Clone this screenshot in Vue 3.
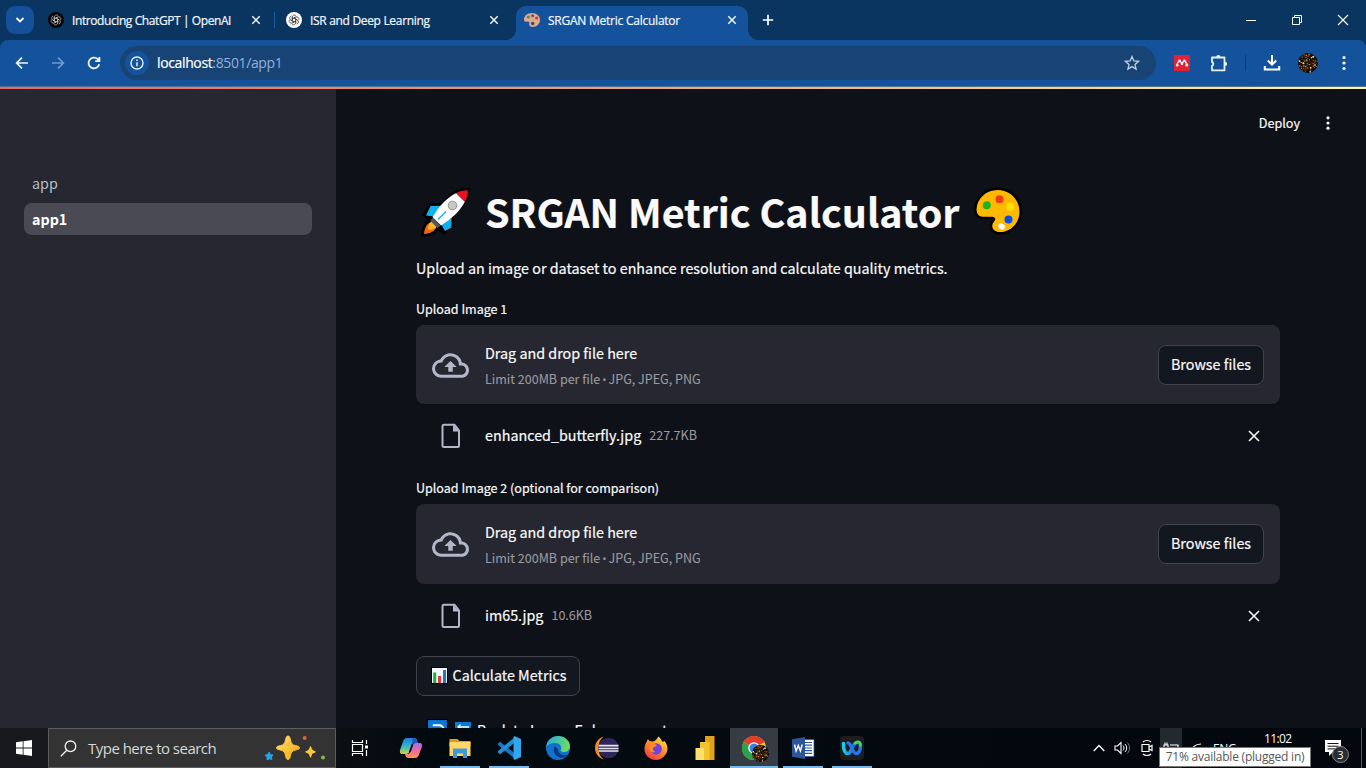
<script setup>
const tabs = [
  { title: 'Introducing ChatGPT | OpenAI', icon: 'gpt-dark', cls: 'tab-first' },
  { title: 'ISR and Deep Learning', icon: 'gpt-light', cls: 'tab-second' },
  { title: 'SRGAN Metric Calculator', icon: 'palette', cls: 'tab-active' },
]
const uploads = [
  { label: 'Upload Image 1', file: 'enhanced_butterfly.jpg', size: '227.7KB', cls: 'up-one' },
  { label: 'Upload Image 2 (optional for comparison)', file: 'im65.jpg', size: '10.6KB', cls: 'up-two' },
]
const petals = [0, 60, 120, 180, 240, 300]
const sparks = Array.from({ length: 70 }, (_, i) => {
  const a = i * 2.39996
  const r = Math.sqrt(i / 70) * 9.4
  return {
    x: 10 + r * Math.cos(a),
    y: 10 + r * Math.sin(a),
    c: ['#c9762b', '#f0d9a0', '#7a3412', '#2b1508', '#4b5a3c', '#b0502a', '#2b1508'][(i * 5) % 7],
    s: 0.5 + ((i * 7) % 5) * 0.14,
  }
})
</script>

<template>
  <div class="screen">
    <header class="tabstrip">
      <div class="tab-search">
        <svg width="10" height="8" viewBox="0 0 10 8"><path d="M1.500 2l3.500 3.500L8.500 2" fill="none" stroke="#fff" stroke-width="1.800" /></svg>
      </div>
      <div v-for="t in tabs" :key="t.title" class="tab" :class="t.cls">
        <svg v-if="t.icon !== 'palette'" class="fav" viewBox="0 0 16 16">
          <circle cx="8" cy="8" r="8" :fill="t.icon === 'gpt-dark' ? '#050505' : '#fff'" />
          <g fill="none" :stroke="t.icon === 'gpt-dark' ? '#c8c8c8' : '#333'" stroke-width=".7">
            <path v-for="p in petals" :key="p" :transform="`rotate(${p} 8 8)`" d="M6.300 9V5.200a2.200 2.200 0 0 1 3.900-1.400M6.300 6.900L9.700 5" />
          </g>
        </svg>
        <svg v-else class="fav" viewBox="0 0 16 16">
          <path d="M8 1C3.500 1 0 3.800 0 7.500c0 2 1.500 2.500 3 2.200 1.800-.4 2.600.6 2.200 2C4.800 13.500 6.200 15 8.500 15 13 15 16 11.800 16 7.800 16 4 12.700 1 8 1z" fill="#dfa78e" />
          <circle cx="4.300" cy="5" r="1.500" fill="#5c8a3a" /><circle cx="8.600" cy="3.700" r="1.500" fill="#3b5f8f" />
          <circle cx="12.600" cy="6" r="1.500" fill="#d8332e" /><circle cx="12.500" cy="10" r="1.500" fill="#efb73a" />
          <circle cx="8.700" cy="11.500" r="1.800" fill="#36507c" />
        </svg>
        <span class="tab-title">{{ t.title }}</span>
        <svg class="tab-x" viewBox="0 0 10 10"><path d="M1.300 1.300l7.400 7.400M8.700 1.300L1.300 8.700" stroke="#f2f7ff" stroke-width="1.500" /></svg>
      </div>
      <svg class="plus" viewBox="0 0 12 12"><path d="M6 .8v10.400M.8 6h10.400" stroke="#fff" stroke-width="1.700" /></svg>
      <div class="winctl">
        <svg viewBox="0 0 12 12"><path d="M1 6.500h10" stroke="#fff" /></svg>
        <svg viewBox="0 0 12 12"><path d="M1.500 3.500h7v7h-7zM3.500 3.500v-2h7v7h-2" fill="none" stroke="#fff" /></svg>
        <svg viewBox="0 0 12 12"><path d="M1 1l10 10M11 1L1 11" stroke="#fff" stroke-width="1.100" /></svg>
      </div>
    </header>

    <div class="toolbar">
      <div class="nav">
        <svg viewBox="0 0 16 16"><path d="M14 8H3M8 2.600L2.600 8 8 13.400" fill="none" stroke="#eef5ff" stroke-width="1.700" /></svg>
        <svg viewBox="0 0 16 16"><path d="M2 8h11M8 2.600L13.400 8 8 13.400" fill="none" stroke="#6f9bd0" stroke-width="1.700" /></svg>
        <svg viewBox="0 0 16 16"><path d="M13.200 9.200A5.400 5.400 0 1 1 11.800 4.200L13.200 5.700M13.400 2v4.200H9.200" fill="none" stroke="#eef5ff" stroke-width="1.800" /></svg>
      </div>
      <div class="omnibox">
        <div class="info">
          <svg viewBox="0 0 14 14"><circle cx="7" cy="7" r="6" fill="none" stroke="#e6f0ff" stroke-width="1.400" /><path d="M7 6.300v4M7 3.500v1.500" stroke="#e6f0ff" stroke-width="1.500" /></svg>
        </div>
        <span class="url"><b>localhost</b>:8501/app1</span>
        <svg class="star" viewBox="0 0 16 16"><path d="M8 1.500l1.900 4.400 4.700.4L11 9.400l1.100 4.700L8 11.600l-4.100 2.500L5 9.400 1.400 6.300l4.700-.4z" fill="none" stroke="#c3cfdf" stroke-width="1.300" /></svg>
      </div>
      <div class="ext">
        <svg class="mendeley" viewBox="0 0 16 16"><path d="M0 0h16v16H0z" fill="#e02338" /><path d="M3.200 10.400C3.200 8.300 4 7 5.500 5.800 6.500 6.300 7 7.500 8 8.400 9 7.500 9.500 6.300 10.500 5.800 12 7 12.800 8.300 12.800 10.400" fill="none" stroke="#fff" stroke-width="1.300" /><circle cx="5.600" cy="5.700" r="1.300" fill="#fff" /><circle cx="10.400" cy="5.700" r="1.300" fill="#fff" /><circle cx="8" cy="8.700" r="1.200" fill="#fff" /><circle cx="3.200" cy="10.300" r="1.300" fill="#fff" /><circle cx="12.800" cy="10.300" r="1.300" fill="#fff" /></svg>
        <svg class="puzzle" viewBox="0 0 18 18"><path d="M2 3.500H14.500V16.300H2v-4.400a2.200 2.200 0 0 0 0-4z" fill="none" stroke="#eaf2ff" stroke-width="1.800" stroke-linejoin="round" /><path d="M6.300 3a2.100 2.100 0 0 1 4.200 0zM15 7.800a2.100 2.100 0 0 1 0 4.200z" fill="#eaf2ff" /></svg>
        <i class="bar"></i>
        <svg class="dl" viewBox="0 0 18 18"><path d="M9 1v9.500M4.800 6.500L9 10.700l4.200-4.200M1.800 12v3.600h14.400V12" fill="none" stroke="#fff" stroke-width="2" /></svg>
        <svg class="avatar" viewBox="0 0 20 20"><circle cx="10" cy="10" r="10" fill="#120b06" /><circle v-for="(s, i) in sparks" :key="i" :cx="s.x" :cy="s.y" :r="s.s" :fill="s.c" /></svg>
        <svg class="kebab" viewBox="0 0 4 16"><circle cx="2" cy="2.500" r="1.600" fill="#fff" /><circle cx="2" cy="8" r="1.600" fill="#fff" /><circle cx="2" cy="13.500" r="1.600" fill="#fff" /></svg>
      </div>
    </div>
    <div class="rainbow"></div>

    <div class="page">
      <aside>
        <a>app</a>
        <a class="on">app1</a>
      </aside>
      <main>
        <div class="apphead">
          <span>Deploy</span>
          <svg viewBox="0 0 4 16"><circle cx="2" cy="2.800" r="1.600" fill="#fafafa" /><circle cx="2" cy="8" r="1.600" fill="#fafafa" /><circle cx="2" cy="13.200" r="1.600" fill="#fafafa" /></svg>
        </div>
        <div class="col">
          <h1>
            <svg class="rocket" viewBox="0 0 50 50">
              <path d="M48.500 1.500C38 1 31 5 23.500 14.500L22 17l-13-.5L2 28l5.500 5.500C3 36.500 1 41 .8 49c8-.2 12.700-2.200 15.700-6.700L23 47l9-7.500V27C43 19 49 12 48.500 1.500z" fill="#000" stroke="#000" stroke-width="1.500" />
              <path d="M9.500 19h11l-8 10.500L5 28.500zM30.500 31v9.500L24 44l-4-7z" fill="#0fb0ee" />
              <path d="M9.500 35.500c-4 1.500-6 5-6.500 11.500 6.500-.5 10.500-2.500 12-6.500z" fill="#f7630c" /><path d="M10.500 34.500c-3 2-3.500 4.500-3.500 8 4.500.5 7.500-.5 9-3.500z" fill="#ffb52e" />
              <path d="M12 30.500l7.500 8.500-3.200 2-7-7.200z" fill="#555" />
              <path d="M11.500 30C19 18 26 10.500 35.500 6l8.500 8.500C39 24 31 31.500 20 38.500z" fill="#fff" />
              <path d="M35 6.200C39 4 42.500 3.200 46.800 3.200c0 4.300-.8 7.800-3 11.800z" fill="#e81224" />
              <circle cx="31.500" cy="18.500" r="4.800" fill="#9c9c9c" /><circle cx="31.500" cy="18.500" r="3.700" fill="#c7c7c7" />
              <path d="M17 32.500l8-8" stroke="#0fb0ee" stroke-width="1.500" />
            </svg>
            <span>SRGAN Metric Calculator</span>
            <svg class="palette" viewBox="0 0 50 50">
              <path d="M24.500 3C13 3 4 11.500 3.500 22.500 3.500 28 7 30 12 29.800h7c3.500.2 4.200 2.500 2 4.700-3.500 4.500-1.500 9.500 4 10.500C37 46 46.500 36.500 46.500 25 46.500 12.500 37 3 24.500 3z" fill="#ffb900" stroke="#000" stroke-width="5" paint-order="stroke" stroke-linejoin="round" />
              <circle cx="13.800" cy="18.300" r="4" fill="#1cb522" /><circle cx="26.500" cy="12.200" r="4" fill="#f03a17" /><circle cx="37.300" cy="19.800" r="4" fill="#ffe000" /><circle cx="35.500" cy="32.500" r="4" fill="#0a4fe0" />
              <ellipse cx="28.600" cy="39.500" rx="3.500" ry="2.800" transform="rotate(35 28.600 39.500)" fill="#fff" />
            </svg>
          </h1>
          <p class="lead">Upload an image or dataset to enhance resolution and calculate quality metrics.</p>
          <section v-for="u in uploads" :key="u.label" :class="u.cls">
            <label>{{ u.label }}</label>
            <div class="drop">
              <svg class="cloud" viewBox="0 0 24 24"><path d="M19.350 10.040A7.490 7.490 0 0 0 12 4C9.110 4 6.600 5.640 5.350 8.040A5.994 5.994 0 0 0 0 14c0 3.310 2.690 6 6 6h13c2.760 0 5-2.240 5-5 0-2.640-2.050-4.780-4.650-4.960zM19 18H6c-2.210 0-4-1.790-4-4s1.790-4 4-4h.71C7.370 7.690 9.480 6 12 6c3.040 0 5.500 2.460 5.500 5.500v.5H19c1.660 0 3 1.340 3 3s-1.340 3-3 3zM8 13h2.550v3h2.900v-3H16l-4-4z" fill="#b4b7ca" /></svg>
              <div class="dtext">
                <span class="d1">Drag and drop file here</span>
                <span class="d2">Limit 200MB per file <i>•</i> JPG, JPEG, PNG</span>
              </div>
              <div class="btn browse">Browse files</div>
            </div>
            <div class="file">
              <svg class="doc" viewBox="0 0 20 26"><path d="M13.500 1.700H3A1.500 1.500 0 0 0 1.500 3.200v19.300A1.500 1.500 0 0 0 3 24h13.500a1.500 1.500 0 0 0 1.500-1.500V7.500z" fill="none" stroke="#b4b7ca" stroke-width="2" /><path d="M12 1.500v7h6.500z" fill="#b4b7ca" /></svg>
              <span class="fname">{{ u.file }}</span>
              <span class="fsize">{{ u.size }}</span>
              <svg class="fx" viewBox="0 0 12 12"><path d="M1 1l10 10M11 1L1 11" stroke="#fafafa" stroke-width="1.600" /></svg>
            </div>
          </section>
          <div class="btn calc">
            <svg viewBox="0 0 17 17"><path d="M0 0h17v17H0z" fill="#000" /><path d="M1 1h15v15H1z" fill="#f4f6fa" /><path d="M2.200 5.500h3V16h-3z" fill="#16b335" /><path d="M7 9h3v7H7z" fill="#e8323c" /><path d="M12 3h3v13h-3z" fill="#1579cf" /></svg>
            <span>Calculate Metrics</span>
          </div>
          <div class="back">
            <svg class="b1" viewBox="0 0 20 20"><path d="M0 0h20v20H0z" fill="#000" /><path d="M1 1h18v18H1z" fill="#0a78d6" /><path d="M5.500 6h6.500a3.500 3.500 0 0 1 0 7H6" fill="none" stroke="#fff" stroke-width="1.800" /></svg>
            <svg class="b2" viewBox="0 0 16 16"><path d="M0 0h16v16H0z" fill="#0a78d6" /><path d="M3 5h11M5.500 2.500L3 5l3 3" fill="none" stroke="#fff" stroke-width="1.300" /></svg>
            <span>Back to Image Enhancement</span>
          </div>
        </div>
      </main>
    </div>

    <footer>
      <div class="start">
        <svg viewBox="0 0 16 16"><path d="M0 2.300l6.700-1v6.300H0zM7.500 1.200L16 0v7.600H7.500zM0 8.400h6.700v6.300L0 13.700zM7.500 8.400H16V16l-8.500-1.200z" fill="#fff" /></svg>
      </div>
      <div class="search">
        <svg class="mag" viewBox="0 0 17 17"><circle cx="10.500" cy="6.300" r="5.300" fill="none" stroke="#f3f3f3" stroke-width="1.300" /><path d="M6.800 10.200L.8 16.200" stroke="#f3f3f3" stroke-width="1.300" /></svg>
        <span>Type here to search</span>
        <svg class="stars" viewBox="0 0 62 26">
          <defs><linearGradient id="gold" x1="0" y1="0" x2="1" y2="1"><stop offset="0" stop-color="#ffe168" /><stop offset="1" stop-color="#f5a50c" /></linearGradient></defs>
          <path d="M24 1c1.500 0 2 1.500 2.500 4 .8 3.500 1.500 4.800 5 5.600 3 .6 4 1 4 2.200s-1 1.600-4 2.300c-3.500.8-4.200 2-5 5.500-.5 2.500-1 4-2.500 4s-2-1.500-2.500-4c-.8-3.500-1.500-4.700-5-5.500-3-.7-4-1.100-4-2.300s1-1.600 4-2.200c3.500-.8 4.200-2.100 5-5.600.5-2.500 1-4 2.500-4z" fill="url(#gold)" stroke="url(#gold)" />
          <path d="M46.500 12c.9 3.200 1.500 3.800 4.500 4.800-3 1-3.600 1.700-4.500 5-.9-3.300-1.500-4-4.500-5 3-1 3.600-1.600 4.500-4.800z" fill="#ffc936" stroke="#ffc936" stroke-width="1.300" stroke-linejoin="round" />
          <path d="M5 17l1.500 2.800 2.500.2-1.700 2.200.7 2.300-2.600-.8-2.400 1.300v-2.700L1.200 20l2.600-.3z" fill="#25a5e5" stroke="#25a5e5" stroke-linejoin="round" />
          <circle cx="40.700" cy="3" r="2" fill="#df613c" /><circle cx="59" cy="22.500" r="2" fill="#87bd43" />
        </svg>
      </div>
      <div class="apps">
        <div class="app tv"><svg viewBox="0 0 18 18"><path d="M1.500 1v2.500h10V1M1.500 17v-2.500h10V17M1.500 5.500h10v7h-10zM15.500 1v4M15.500 11v6" fill="none" stroke="#fff" stroke-width="1.200" /><path d="M14 6.500h3v3h-3z" fill="#fff" /></svg></div>
        <div class="app"><svg viewBox="0 0 24 24">
          <defs><linearGradient id="cpA" x1="0" y1="0" x2="0" y2="1"><stop offset="0" stop-color="#1c7fe8" /><stop offset=".55" stop-color="#35b9c4" /><stop offset="1" stop-color="#d9d637" /></linearGradient><linearGradient id="cpB" x1="0" y1="0" x2="0" y2="1"><stop offset="0" stop-color="#a66cf0" /><stop offset=".5" stop-color="#ef6aa0" /><stop offset="1" stop-color="#ff9552" /></linearGradient></defs>
          <path d="M8 2h7c2 0 2.700 1 3.200 3l.6 2h-3c-2 0-3 1-3.600 3l-1.600 5c-.7 2-1.600 3-3.600 3H3.500C1 18 .5 16 1.200 13.500l3-8.500C5 3 6 2 8 2z" fill="url(#cpA)" /><path d="M14 2c2.300 0 3.200 1 3.700 3l.5 2h-2.700c-2 0-3 1-3.500 3z" fill="#2357c7" />
          <path d="M16 22H9.500c-2 0-2.700-1-3.200-3L6 18h2c2 0 3-1 3.600-3l1.700-5c.7-2 1.700-3 3.700-3h3.500C23 7 23.500 9 22.800 11l-2.900 8c-.9 2-1.900 3-3.900 3z" fill="url(#cpB)" /><path d="M13.500 8.500L10.800 16" stroke="#071018" stroke-width="1.800" />
        </svg></div>
        <div class="app run"><svg viewBox="0 0 24 24"><path d="M1.500 3h8l2 2H22.500v5h-21z" fill="#d99b22" /><path d="M1.500 6h21v14h-21z" fill="#ffd667" /><path d="M5 22v-9.500h14V22h-4v-4.500H9V22z" fill="#3f9bd8" /></svg></div>
        <div class="app run"><svg viewBox="0 0 24 24"><path d="M1 7.500l2-1.700L18 17.500V23L1 9z" fill="#1677bd" /><path d="M1 16.500l2 1.700L18 6.500V1L1 15z" fill="#1f8fda" /><path d="M17.500 0L24 3v18l-6.500 3-1-1V1z" fill="#2fa8ef" /></svg></div>
        <div class="app"><svg viewBox="0 0 24 24">
          <defs><linearGradient id="edA" x1="0" y1="0" x2="1" y2=".3"><stop offset="0" stop-color="#24a8e8" /><stop offset="1" stop-color="#68dc64" /></linearGradient></defs>
          <circle cx="12" cy="12" r="12" fill="#1272ca" /><path d="M.2 11C1 4 6 0 12 0c7 0 12 5 12 10 0 4-3 6-6 6-2.500 0-4-1-3.200-2.500C16.500 10 13 7 9.500 7 5 7 1.500 8.500.2 11z" fill="url(#edA)" /><path d="M9 10c-3 4-.5 10 5 11.500 3.500.7 6.500-.5 8.300-3-4.300 1.500-10 .5-10.300-5z" fill="#0b3a80" />
        </svg></div>
        <div class="app"><svg viewBox="0 0 24 24"><path d="M9 .5C3 2 0 7 0 12s3 10 9 11.500C4.500 20 3.500 16 3.500 12S4.500 4 9 .5z" fill="#f28c24" /><circle cx="13.500" cy="12" r="10.300" fill="#2f2558" /><path d="M3.500 8.700h20v1.800h-20zM3.500 11.700h20v1.500h-20zM3.500 14.300h20v1.500h-20z" fill="#e9e6f2" /></svg></div>
        <div class="app"><svg viewBox="0 0 24 24">
          <defs><linearGradient id="ffA" x1=".8" y1="0" x2=".2" y2="1"><stop offset="0" stop-color="#ffe24a" /><stop offset=".5" stop-color="#ff8a25" /><stop offset="1" stop-color="#f0304c" /></linearGradient></defs>
          <path d="M14.500.5c2 2 3 3 3.500 5 1 .3 1.500.2 2.500-.5 2.500 3 3 5.500 3 8C23 19 18 24 12 24S.5 19.500.5 13c0-3 1-5.500 2.500-8 .3-1 .8-1.700 1-2 1 2 2 2.500 4 2.500 2.500 0 4-1 6.500-5z" fill="url(#ffA)" /><circle cx="12.200" cy="13" r="5.700" fill="#7143dc" /><path d="M4 6c3-1 6 0 7 2l2 1c-1 2-3 1.500-4 3-.5 2 .5 3 2.500 4C7 18 4 13 4 6z" fill="#ff8a2a" />
        </svg></div>
        <div class="app"><svg viewBox="0 0 24 24"><path d="M12 0h9.500v24H12z" fill="#e0a31b" /><path d="M7 6h9.500v18H7z" fill="#f2c52e" /><path d="M2.500 12H11v12H2.500z" fill="#ffe06c" /></svg></div>
        <div class="app run cur">
          <svg viewBox="0 0 24 24"><circle cx="12" cy="12" r="12" fill="#f7c62f" /><path d="M12 12L1.600 6A12 12 0 0 1 22.400 6z" fill="#e33b2e" /><path d="M12 12L1.600 6A12 12 0 0 0 12 24l5-9z" fill="#2aa14a" /><circle cx="12" cy="12" r="5.800" fill="#fff" /><circle cx="12" cy="12" r="4.500" fill="#347ee8" /></svg>
          <svg class="mini" viewBox="0 0 20 20"><circle cx="10" cy="10" r="10" fill="#120b06" /><circle v-for="(s, i) in sparks" :key="i" :cx="s.x" :cy="s.y" :r="s.s" :fill="s.c" /></svg>
        </div>
        <div class="app run"><svg viewBox="0 0 24 24"><path d="M12 3.500h11v17H12z" fill="#fff" stroke="#2b579a" stroke-width=".8" /><path d="M14 6.500h7M14 9.200h7M14 12h7M14 14.700h7M14 17.400h7" stroke="#2b579a" stroke-width="1.200" /><path d="M1 3.200L14 1v22L1 20.800z" fill="#2b579a" /><path d="M3.500 8.500l1.600 6.500L7.300 9.500l2.100 5.500L11.200 8.500" fill="none" stroke="#fff" stroke-width="1.400" /></svg></div>
        <div class="app run"><svg viewBox="0 0 24 24"><defs><linearGradient id="wbA"><stop offset="0" stop-color="#1ccbe8" /><stop offset="1" stop-color="#1d54e8" /></linearGradient></defs><rect width="24" height="24" rx="4" fill="#1d1d1f" /><path d="M3.500 7.500c0 6 1.500 10 4.500 10 4 0 4-10.500 8.500-10.500" fill="none" stroke="url(#wbA)" stroke-width="3.600" stroke-linecap="round" /><path d="M8 7c3.500 0 4 10.500 8 10.500 3 0 4.500-4 4.500-9" fill="none" stroke="#2574f0" stroke-width="3.400" stroke-linecap="round" /><path d="M15 7.200c3-2 5.300-1.500 5.300 2" fill="none" stroke="#43d468" stroke-width="3" stroke-linecap="round" /></svg></div>
      </div>
      <div class="tray">
        <svg class="chev" viewBox="0 0 12 12"><path d="M.7 9L6 3.500 11.300 9" fill="none" stroke="#fff" stroke-width="1.300" /></svg>
        <svg class="spk" viewBox="0 0 17 14"><path d="M1 5h2.500L7 1.500v11L3.500 9H1z" fill="none" stroke="#fff" stroke-width="1.100" /><path d="M9 4.500c1.300 1.500 1.300 3.500 0 5M11 3c2.200 2.500 2.200 5.500 0 8" fill="none" stroke="#fff" /><path d="M13.300 1.500c3 3.500 3 7.500 0 11" fill="none" stroke="#777" /></svg>
        <svg class="cam" viewBox="0 0 12 18"><path d="M1 5.500h7v7H1zM8 8l3-1.500v5L8 10M2 3c2-2 6-2 8 0M2 15c2 2 6 2 8 0" fill="none" stroke="#fff" stroke-width="1.200" /></svg>
        <div class="bat"><svg viewBox="0 0 16 14"><path d="M1 4h4v3a2 2 0 0 1-4 0zM2 1.500V4M4 1.500V4M7 4h8v7H3V9" fill="none" stroke="#fff" stroke-width="1.100" /></svg></div>
        <svg class="wifi" viewBox="0 0 14 14"><path d="M2 12C2 7 6 3 12 3M5.500 12c0-3 2.500-5.500 6.500-5.500" fill="none" stroke="#fff" stroke-width="1.100" /></svg>
        <span class="eng">ENG</span>
        <span class="clock">11:02</span>
        <div class="note">
          <svg viewBox="0 0 16 16"><path d="M0 0h16v12H8l-4 4v-4H0z" fill="#fff" /><path d="M2.500 3.500h11M2.500 6.200h11M2.500 8.900h8" stroke="#111" /></svg>
          <span class="badge">3</span>
        </div>
        <i class="edge"></i>
        <div class="tip">71% available (plugged in)</div>
      </div>
    </footer>
  </div>
</template>

<style>
html, body { margin: 0; background: #0e1117; overflow: hidden; }
</style>
<style scoped>
* { box-sizing: border-box; }
svg { display: block; flex: none; }
.screen { width: 1366px; height: 768px; display: flex; flex-direction: column; overflow: hidden; background: #0b3460; font-family: "Open Sans", "Noto Sans", sans-serif; }
.tabstrip { height: 40px; flex: none; display: flex; align-items: center; background: #0b3561; }
.tab-search { width: 28px; height: 28px; margin-left: 6px; border-radius: 9px; background: #14519a; display: flex; align-items: center; justify-content: center; }
.tab { display: flex; align-items: center; height: 34px; margin-top: 6px; padding-left: 8px; position: relative; color: #f2f7ff; }
.tab-first, .tab-second { padding-bottom: 6px; }
.tab-first { width: 235px; margin-left: 6px; }
.tab-first::after { content: ""; position: absolute; right: 0; top: 6px; width: 1px; height: 16px; background: #1a5aa4; }
.tab-second { width: 238px; margin-left: 3px; }
.tab-active { width: 232px; background: #14539c; border-radius: 10px 10px 0 0; padding-bottom: 6px; }
.tab-active::before, .tab-active::after { content: ""; position: absolute; bottom: 0; width: 10px; height: 10px; }
.tab-active::before { left: -10px; background: radial-gradient(circle at 0 0, transparent 9.5px, #14539c 10px); }
.tab-active::after { right: -10px; background: radial-gradient(circle at 100% 0, transparent 9.5px, #14539c 10px); }
.fav { width: 16px; height: 16px; }
.tab-title { margin-left: 8px; padding-top: 1px; font-size: 12px; line-height: 16px; white-space: nowrap; letter-spacing: -.24px; -webkit-text-stroke: .2px; }
.tab-first .tab-title { letter-spacing: -.41px; }
.tab-second .tab-title { letter-spacing: -.32px; }
.tab-x { width: 10px; height: 10px; margin-left: auto; margin-right: 11px; }
.tab-first .tab-x { margin-right: 14px; }
.tab-second .tab-x { margin-right: 17px; }
.plus { width: 12px; height: 12px; margin-left: 14px; }
.winctl { margin-left: auto; display: flex; gap: 34px; padding-right: 17px; }
.winctl svg { width: 12px; height: 12px; }
.toolbar { height: 46px; flex: none; display: flex; align-items: center; background: #14539c; border-radius: 8px 8px 0 0; }
.nav { display: flex; gap: 20px; margin-left: 14px; }
.nav svg { width: 16px; height: 16px; }
.omnibox { width: 1036px; height: 34px; margin-left: 18px; border-radius: 17px; background: #174475; display: flex; align-items: center; padding-left: 5px; }
.info { width: 24px; height: 24px; border-radius: 50%; background: #14539c; display: flex; align-items: center; justify-content: center; }
.info svg { width: 14px; height: 14px; }
.url { margin-left: 8px; font-size: 14px; line-height: 20px; color: #92b1db; letter-spacing: -.37px; }
.url b { font-weight: 400; color: #fff; -webkit-text-stroke: .2px; }
.star { width: 16px; height: 16px; margin-left: auto; margin-right: 16px; }
.ext { display: flex; align-items: center; }
.mendeley { width: 16px; height: 16px; margin-left: 18px; }
.puzzle { width: 18px; height: 18px; margin-left: 20px; }
.bar { width: 1px; height: 16px; background: #0d3d75; margin-left: 17px; }
.dl { width: 18px; height: 18px; margin-left: 17px; }
.avatar { width: 20px; height: 20px; margin-left: 17px; }
.kebab { width: 4px; height: 16px; margin-left: 24px; }
.rainbow { height: 3px; flex: none; background: linear-gradient(90deg, #e8666a, #e6a887 50%, #fdf7a2); border-top: 1px solid #55718a; }
.page { height: 639px; flex: none; display: flex; overflow: hidden; font-family: "Noto Sans CJK SC", "Noto Sans", sans-serif; color: #fafafa; -webkit-text-stroke: .2px; }
aside { width: 336px; flex: none; background: #262730; padding: 78px 24px 0; display: flex; flex-direction: column; gap: 4px; }
aside a { height: 32px; line-height: 32px; padding-left: 8px; border-radius: 8px; font-size: 14.300px; color: #b6bfc8; -webkit-text-stroke: 0; }
aside a.on { background: #494a54; color: #fff; font-weight: 700; }
main { flex: 1; background: #0e1117; }
.apphead { height: 68px; display: flex; align-items: center; justify-content: flex-end; font-size: 12.600px; }
.apphead span { padding-bottom: 2px; }
.apphead svg { width: 4px; height: 16px; margin: 0 36px 0 26px; }
.col { width: 864px; margin-left: 80px; }
h1 { height: 60px; margin: 27px 0 0; display: flex; align-items: center; font-size: 39.400px; line-height: 60px; font-weight: 700; white-space: nowrap; }
h1 .rocket { width: 50px; height: 50px; margin: -4px 0 0 5px; }
h1 span { margin-left: 14px; padding-bottom: 6px; }
h1 .palette { width: 50px; height: 50px; margin: -4px 0 0 13px; }
.lead { height: 24px; margin: 12px 0 0; font-size: 14.330px; line-height: 24px; white-space: nowrap; }
.up-one { margin-top: 19px; }
.up-two { margin-top: 10px; }
label { display: block; height: 20px; line-height: 20px; font-size: 12.540px; }
.drop { height: 79px; margin-top: 6px; border-radius: 8px; background: #262730; display: flex; align-items: center; padding: 0 16px; }
.up-two .drop { height: 80px; }
.cloud { width: 37px; height: 37px; }
.up-one .cloud { margin-top: 1px; }
.dtext { margin-left: 16px; display: flex; flex-direction: column; gap: 4px; }
.d1 { font-size: 14.330px; line-height: 24px; }
.d2 { font-size: 12.540px; line-height: 20px; color: #999a9f; -webkit-text-stroke: .1px; }
.d2 i { font-family: "Noto Sans", sans-serif; font-style: normal; font-size: 10px; margin: 0 -.6px; line-height: 1; }
.btn { height: 40px; border: 1px solid #41434b; border-radius: 8px; background: #131720; display: flex; align-items: center; justify-content: center; font-size: 14.330px; line-height: 24px; white-space: nowrap; padding-bottom: 2px; }
.browse { width: 106px; margin-left: auto; }
.file { height: 64px; display: flex; align-items: center; padding-left: 25px; }
.doc { width: 20px; height: 26px; }
.fname { margin-left: 24px; font-size: 14.330px; line-height: 24px; padding-bottom: 2px; }
.fsize { margin-left: 8px; font-size: 12.540px; line-height: 20px; color: #999a9f; padding-bottom: 2px; -webkit-text-stroke: .1px; }
.fx { width: 12px; height: 12px; margin-left: auto; margin-right: 20px; }
.calc { width: 164px; margin-top: 8px; padding-left: 1px; }
.calc svg { width: 17px; height: 17px; margin-right: 5px; }
.back { margin-top: 22px; height: 30px; display: flex; padding-left: 11px; font-size: 14.330px; line-height: 24px; }
.back .b1 { width: 21px; height: 21px; margin-top: 1px; }
.back .b2 { width: 16px; height: 16px; margin: 4px 0 0 7px; }
.back span { margin-left: 6px; white-space: nowrap; }
footer { height: 40px; flex: none; display: flex; background: linear-gradient(90deg, #14171c 0, #0c0f13 336px, #020a10 420px, #040a10 700px, #01070c 100%); color: #fff; }
.start { width: 48px; display: flex; align-items: center; justify-content: center; background: #17191d; }
.start svg { width: 16px; height: 16px; }
.search { width: 288px; height: 40px; background: #333; border: 1px solid #5c5c5c; display: flex; align-items: center; padding-left: 11px; color: #d8d8d8; font-size: 15px; }
.search .mag { width: 17px; height: 17px; }
.search span { margin-left: 11px; letter-spacing: -.52px; white-space: nowrap; }
.stars { width: 62px; height: 26px; margin-left: auto; margin-right: 9px; }
.apps { display: flex; gap: 1px; }
.app { width: 48px; height: 40px; display: flex; align-items: center; justify-content: center; position: relative; }
.app svg { width: 24px; height: 24px; }
.app.tv { margin-right: 2px; }
.app.tv svg { width: 18px; height: 18px; }
.run::after { content: ""; position: absolute; left: 4px; bottom: 0; width: 40px; height: 2px; background: #76b9ed; }
.cur { background: #353c43; }
.cur::after { left: 0; width: 48px; }
.app .mini { position: absolute; width: 17px; height: 17px; left: 22px; top: 17px; }
.tray { margin-left: auto; display: flex; align-items: center; position: relative; }
.chev { width: 12px; height: 12px; }
.spk { width: 17px; height: 14px; margin-left: 9px; }
.cam { width: 12px; height: 18px; margin-left: 10px; }
.bat { width: 22px; height: 40px; margin-left: 7px; background: #22292f; display: flex; align-items: center; justify-content: center; }
.bat svg { width: 16px; height: 14px; }
.wifi { width: 14px; height: 14px; margin-left: 7px; }
.eng { font-size: 12px; margin-left: 10px; width: 24px; letter-spacing: -.3px; }
.clock { font-size: 12px; width: 30px; margin-left: 27px; line-height: 16px; align-self: flex-start; margin-top: 3px; letter-spacing: -.6px; }
.note { position: relative; margin-left: 31px; width: 16px; height: 16px; }
.note svg { width: 16px; height: 16px; }
.badge { position: absolute; left: 7px; top: 6px; width: 17px; height: 17px; border-radius: 50%; background: #2a2d31; border: 1px solid #85888b; font-size: 11px; line-height: 15px; text-align: center; }
.edge { width: 1px; height: 40px; background: #54585c; margin: 0 4px 0 20px; }
.tip { position: absolute; left: 66px; top: 19px; width: 152px; height: 20px; background: #fff; border: 1px solid #777; color: #575757; font-size: 12px; line-height: 18px; text-align: center; white-space: nowrap; letter-spacing: -.22px; }
</style>
